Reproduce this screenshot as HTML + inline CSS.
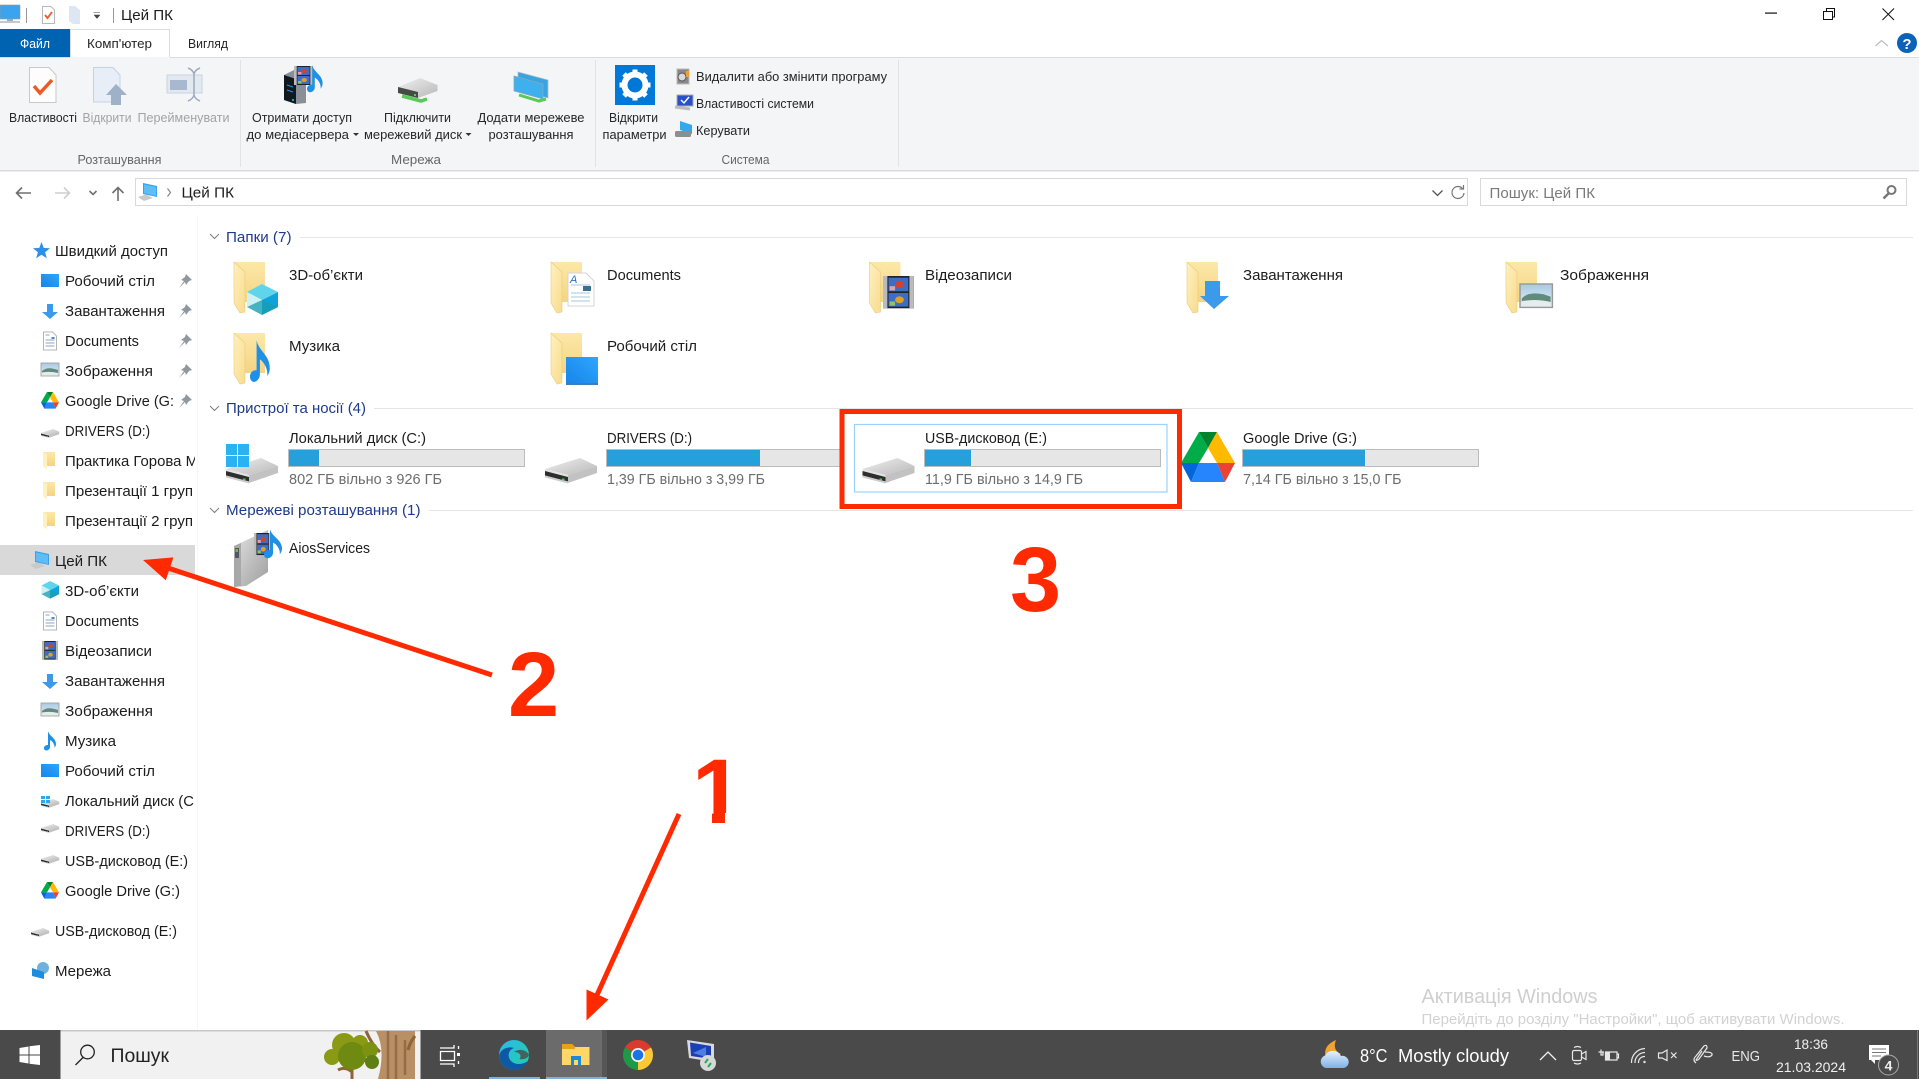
<!DOCTYPE html>
<html lang="uk"><head><meta charset="utf-8"><title>Цей ПК</title>
<style>
html,body{margin:0;padding:0;background:#fff;width:1919px;height:1079px;overflow:hidden}
svg{display:block;font-family:"Liberation Sans","Noto Sans CJK SC",sans-serif}
.t{font-size:15px;fill:#1c1c1c}
.r{font-size:12.5px;fill:#262626}
.g{font-size:12.5px;fill:#a3a3a3}
.h{font-size:12.5px;fill:#666}
.s{font-size:15px;fill:#1e3a8a}
.f{font-size:14.5px;fill:#6d6d6d}
.w{fill:#fff}
.big{font-size:92px;font-weight:bold;fill:#ff2a00}
.tray{fill:none;stroke:#e8e8e8;stroke-width:1.2}
</style></head><body>
<svg width="1919" height="1079" viewBox="0 0 1919 1079" xmlns="http://www.w3.org/2000/svg">
<defs>
<linearGradient id="fb" x1="0" y1="0" x2="0" y2="1"><stop offset="0" stop-color="#fde8a8"/><stop offset="1" stop-color="#f2cf7c"/></linearGradient>
<linearGradient id="ff" x1="0" y1="0" x2="1" y2="1"><stop offset="0" stop-color="#fff0c0"/><stop offset="1" stop-color="#f8dc8d"/></linearGradient>
<linearGradient id="dk" x1="0" y1="0" x2="1" y2="1"><stop offset="0" stop-color="#f0f0f0"/><stop offset="1" stop-color="#b8b8b8"/></linearGradient>
<linearGradient id="bl" x1="0" y1="1" x2="1" y2="0"><stop offset="0" stop-color="#1684e8"/><stop offset="1" stop-color="#2ea6ff"/></linearGradient>
<linearGradient id="edge" x1="0" y1="0" x2="1" y2="1"><stop offset="0" stop-color="#2fb8ee"/><stop offset="1" stop-color="#1fd0a0"/></linearGradient>
<linearGradient id="wx" x1="0" y1="0" x2="0" y2="1"><stop offset="0" stop-color="#e8f2fb"/><stop offset="1" stop-color="#7fb0e6"/></linearGradient>
<linearGradient id="tw" x1="0" y1="0" x2="1" y2="1"><stop offset="0" stop-color="#e4e4e4"/><stop offset="1" stop-color="#9d9d9d"/></linearGradient>
<linearGradient id="sky" x1="0" y1="0" x2="0" y2="1"><stop offset="0" stop-color="#a9c9e4"/><stop offset="1" stop-color="#e6f0f4"/></linearGradient>

<g id="folder">
<path d="M0 0H31V40H11V50L0 40Z" fill="url(#fb)"/>
<path d="M0 0L11 10V50L6 51L0 41Z" fill="url(#ff)" stroke="#eccb78" stroke-width=".6"/>
</g>
<g id="cube">
<path d="M0 8L15 0L31 8L15 16Z" fill="#5fd5ec"/>
<path d="M0 8L15 16V31L0 23Z" fill="#cdf2f5"/>
<path d="M15 16L31 8V23L15 31Z" fill="#0fa3da"/>
<path d="M0 23L15 16L31 23L15 31Z" fill="#1a9cb0" opacity=".75"/>
</g>
<g id="drive">
<path d="M0 11L35 0L52 8L23 17Z" fill="url(#dk)"/>
<path d="M23 17L52 8V15L23 25Z" fill="#c2c2c2"/>
<path d="M0 11L23 17V19L0 13Z" fill="#e2e2e2"/>
<path d="M0 13L23 19V23.500L0 17.500Z" fill="#2e2e2e"/>
<path d="M0 17.500L23 23.500V25.500L0 19.500Z" fill="#cdcdcd"/>
<rect x="17" y="20.500" width="2.500" height="1.800" fill="#40d060"/>
</g>
<g id="gd">
<path d="M18 0H36L27 16Z" fill="#00832d"/>
<path d="M18 0L27 16L18 31H0Z" fill="#00ac47"/>
<path d="M36 0L54 31H36L27 16Z" fill="#ffba00"/>
<path d="M0 31H18L10 50Z" fill="#0066da"/>
<path d="M18 31H36L44 50H10Z" fill="#2684fc"/>
<path d="M36 31H54L44 50Z" fill="#ea4335"/>
</g>
<g id="filmb">
<rect x="0" y="0" width="28" height="38" fill="#222"/>
<rect x="0" y="0" width="4" height="38" fill="#bbb"/><rect x="24" y="0" width="4" height="38" fill="#bbb"/>
<rect x="5" y="2" width="18" height="16" fill="#3c6ec8"/><rect x="5" y="20" width="18" height="16" fill="#3c6ec8"/>
<circle cx="15" cy="10" r="4" fill="#d8402a"/><circle cx="15" cy="28" r="4" fill="#e0a020"/>
<rect x="6" y="12" width="5" height="5" fill="#e8a0a0"/><rect x="6" y="30" width="5" height="5" fill="#90c070"/>
</g>
<path id="dl" d="M5 0H11V8H16L8 15L0 8H5Z" fill="#3b9aeb"/>
<g id="doc"><path d="M0 0H9L13 4V18H0Z" fill="#fff" stroke="#b5b5b5"/><path d="M2 3H6M2 8H11M2 11H11M2 14H11" stroke="#8aa6c8" stroke-width="1"/><path d="M8 5H11V7H8Z" fill="#4a8ac8"/></g>
<g id="pic"><rect width="18" height="13" fill="url(#sky)" stroke="#999" stroke-width=".8"/><path d="M1 8Q6 3 17 7V10H1Z" fill="#5f8a7c"/><path d="M1 9.500Q9 8 17 10V12.500H1Z" fill="#e4ecec"/></g>
<g id="sf"><path d="M0 0H12V14H4V17L0 14Z" fill="url(#fb)"/><path d="M0 0L4 2V17L0 14Z" fill="#fff0bf"/></g>
<path id="note" d="M4 0C5 5 12 7 12 13C12 15 11 16 10.500 17C11 13 8 10 6 9V16C6 18 4 19.500 2.500 19.500C1 19.500 0 18.500 0 17C0 15 2 14 4 14Z" fill="#1e90e8"/>
<g id="pin"><path d="M8 0L14 6L11 7L8 11L7 8L1 14L6 7L3 6L7 3Z" fill="#8f989e"/></g>
<g id="pc"><path d="M5 0L19 3V14L5 11Z" fill="#3aa1ea"/><path d="M6 1.500L18 4V13L6 10Z" fill="#5fbcf5"/><path d="M0 14L8 11.500L15 15L6 18Z" fill="#c6cacd"/></g>
</defs>

<!-- window -->
<rect width="1919" height="1079" fill="#fff"/>
<!-- title -->
<rect x="0" y="5" width="20" height="14" fill="#3aa4ee" stroke="#999" stroke-width=".6"/><rect x="7" y="19" width="6" height="2" fill="#aaa"/><rect x="0" y="21" width="20" height="2" fill="#c8c8c8"/>
<rect x="26" y="8" width="1" height="15" fill="#999"/>
<path d="M42.500 6.500H51L54.500 10V23.500H42.500Z" fill="#fff" stroke="#b8b8b8"/><path d="M45 15L47.500 18L52 12" fill="none" stroke="#ee5a24" stroke-width="1.800"/>
<path d="M69 6H75L80 10V24H73L69 21Z" fill="#dfe6f3"/>
<path d="M93.500 12.500H100M94 15H100L97 18.500Z" fill="#444" stroke="#444" stroke-width=".5"/>
<rect x="113" y="8" width="1" height="15" fill="#999"/>
<text class="t" x="121" y="20" textLength="52" lengthAdjust="spacingAndGlyphs">Цей ПК</text>
<rect x="1765" y="12.500" width="12" height="1.200" fill="#111"/>
<path d="M1823.500 11.500H1832.500V19.500H1823.500ZM1826.500 11V8.500H1834.500V17H1832.500" fill="none" stroke="#111" stroke-width="1"/>
<path d="M1882.500 8.500L1894 20M1894 8.500L1882.500 20" stroke="#111" stroke-width="1"/>

<!-- tabs -->
<rect x="0" y="29" width="70" height="28" fill="#0063b1"/>
<text x="20" y="48" class="r" style="fill:#fff" textLength="30" lengthAdjust="spacingAndGlyphs">Файл</text>
<path d="M70.500 57V29.500H169.500V57" fill="#fff" stroke="#dadbdc"/>
<text x="87" y="48" class="r" textLength="65" lengthAdjust="spacingAndGlyphs">Комп'ютер</text>
<text x="188" y="48" class="r" textLength="40" lengthAdjust="spacingAndGlyphs">Вигляд</text>
<path d="M1875.500 46L1881.500 40.500L1888 46" fill="none" stroke="#bcbcbc" stroke-width="1.200"/>
<circle cx="1907" cy="43" r="10" fill="#0b62b8"/><text x="1907" y="49" text-anchor="middle" font-size="15" font-weight="bold" fill="#fff">?</text>

<!-- ribbon -->
<rect x="0" y="57" width="1919" height="114" fill="#f4f5f7"/>
<rect x="0" y="57" width="70" height="1" fill="#dadbdc"/><rect x="170" y="57" width="1749" height="1" fill="#dadbdc"/>
<rect x="0" y="170" width="1919" height="1.500" fill="#dadbdc"/>
<rect x="240" y="60" width="1" height="107" fill="#e2e3e5"/><rect x="595" y="60" width="1" height="107" fill="#e2e3e5"/><rect x="898" y="60" width="1" height="107" fill="#e2e3e5"/>

<path d="M29.500 67.500H49L56 75V102.500H29.500Z" fill="#fdfdfd" stroke="#c9c9c9"/>
<path d="M34 86L40 93L52 80" fill="none" stroke="#ee5a24" stroke-width="3.500"/>
<path d="M93.500 67.500H113L120 75V102H93.500Z" fill="#e7eef8" stroke="#c4d2e6"/>
<path d="M116 84L127 95H121V105H111V95H106Z" fill="#9fb1c8"/>
<rect x="167" y="75" width="35" height="18" fill="#e3e9f1" stroke="#c9d3df"/><rect x="170" y="80" width="17" height="10" fill="#a8b8ce"/>
<path d="M188 68Q193 70 194 74V95Q193 99 188 101M200 68Q195 70 194 74M194 95Q195 99 200 101" fill="none" stroke="#9caabd" stroke-width="1.500"/>

<text class="r" x="9" y="122" textLength="68" lengthAdjust="spacingAndGlyphs">Властивості</text>
<text class="g" x="82.500" y="122" textLength="49" lengthAdjust="spacingAndGlyphs">Відкрити</text>
<text class="g" x="137.500" y="122" textLength="92" lengthAdjust="spacingAndGlyphs">Перейменувати</text>
<text class="h" x="77.500" y="164" textLength="84" lengthAdjust="spacingAndGlyphs">Розташування</text>

<!-- media server -->
<path d="M284 75L294 70L306 74V103L296 104L284 100Z" fill="#8a8f96"/><path d="M284 75L296 79V104L284 100Z" fill="#101820"/>
<path d="M287 85L293 87M287 90L293 92" stroke="#2a90e0" stroke-width="1"/><circle cx="293" cy="100" r="1" fill="#2ad0f0"/>
<use href="#filmb" transform="translate(294,66) scale(.68,.5)"/>
<use href="#note" transform="translate(307,65) scale(1.300,1.400)"/>
<!-- map drive -->
<path d="M398 87L420 78L437.500 85V91L418 98L398 93Z" fill="url(#dk)"/><path d="M398 87L418 92V98L398 93Z" fill="#454a45"/>
<rect x="414" y="94" width="2" height="2" fill="#40d060"/><path d="M402 96L421 101L427 99" fill="none" stroke="#5ac85a" stroke-width="3.500"/>
<!-- net location -->
<path d="M518 72L548 80V98L518 90Z" fill="#3aa4e0" stroke="#a8bccb" stroke-width=".8"/><path d="M514 76L543 84V99L514 91Z" fill="#3fb0ee" stroke="#8aa6ba" stroke-width=".8"/>
<path d="M519 95L539 101L546 99" fill="none" stroke="#5ac85a" stroke-width="3"/>

<text class="r" x="252" y="122" textLength="100" lengthAdjust="spacingAndGlyphs">Отримати доступ</text>
<text class="r" x="246.500" y="139" textLength="102.500" lengthAdjust="spacingAndGlyphs">до медіасервера</text>
<path d="M353 133H359L356 136Z" fill="#333"/>
<text class="r" x="384" y="122" textLength="67" lengthAdjust="spacingAndGlyphs">Підключити</text>
<text class="r" x="364" y="139" textLength="98" lengthAdjust="spacingAndGlyphs">мережевий диск</text>
<path d="M465.500 133H471.500L468.500 136Z" fill="#333"/>
<text class="r" x="477.500" y="122" textLength="107" lengthAdjust="spacingAndGlyphs">Додати мережеве</text>
<text class="r" x="488.500" y="139" textLength="85" lengthAdjust="spacingAndGlyphs">розташування</text>
<text class="h" x="391" y="164" textLength="50" lengthAdjust="spacingAndGlyphs">Мережа</text>

<!-- settings -->
<rect x="615" y="65" width="40" height="40" fill="#0078d7"/>
<circle cx="635" cy="85" r="10.500" fill="none" stroke="#fff" stroke-width="6"/>
<g stroke="#fff" stroke-width="5"><path d="M635 69.500V74M635 96V100.500M619.500 85H624M646 85H650.500M624 74L627.500 77.500M642.500 92.500L646 96M646 74L642.500 77.500M627.500 92.500L624 96"/></g>
<text class="r" x="609" y="122" textLength="49" lengthAdjust="spacingAndGlyphs">Відкрити</text>
<text class="r" x="602.500" y="139" textLength="64" lengthAdjust="spacingAndGlyphs">параметри</text>
<rect x="677" y="69" width="12" height="15" fill="#888" stroke="#bbb"/><circle cx="682" cy="77" r="4" fill="#d8d8d8" stroke="#555"/><rect x="686" y="71" width="3" height="6" fill="#f0a030"/>
<rect x="677" y="95" width="16" height="11" fill="#2a50c8" stroke="#aaa"/><path d="M681 100L684 103L689 97" fill="none" stroke="#fff" stroke-width="1.400"/><path d="M675 107L690 109" stroke="#bbb" stroke-width="3"/>
<path d="M680 121L692 125V134L680 130Z" fill="#32a8ee"/><rect x="675" y="131" width="16" height="6" fill="#8a8f94" rx="1.500"/>
<text class="r" x="696" y="81" textLength="191" lengthAdjust="spacingAndGlyphs">Видалити або змінити програму</text>
<text class="r" x="696" y="108" textLength="118" lengthAdjust="spacingAndGlyphs">Властивості системи</text>
<text class="r" x="696" y="135" textLength="54" lengthAdjust="spacingAndGlyphs">Керувати</text>
<text class="h" x="721.500" y="164" textLength="48" lengthAdjust="spacingAndGlyphs">Система</text>

<!-- nav -->
<g fill="none" stroke="#6f6f6f" stroke-width="1.600">
<path d="M16.500 193H31M22 187.500L16.500 193L22 198.500"/>
<path d="M55 193H69.500M64 187.500L69.500 193L64 198.500" stroke="#cfcfcf"/>
<path d="M89.500 191L93 194.500L96.500 191"/>
<path d="M118 187.500V201M112.500 193L118 187.500L123.500 193"/>
</g>
<path d="M135.500 178.500H1467.500V205.500H135.500Z" fill="#fff" stroke="#d9d9d9"/>
<path d="M1480.500 178.500H1906.500V205.500H1480.500Z" fill="#fff" stroke="#d9d9d9"/>
<use href="#pc" transform="translate(138,183)"/>
<path d="M167.500 188.500L170.500 192.500L167.500 196.500" fill="none" stroke="#888" stroke-width="1.200"/>
<text class="t" x="181.500" y="197.500" textLength="52.500" lengthAdjust="spacingAndGlyphs">Цей ПК</text>
<path d="M1432.500 190.500L1437.500 195.500L1442.500 190.500" fill="none" stroke="#555" stroke-width="1.300"/>
<path d="M1462.500 188.500A6 6 0 1 0 1464 193M1463.500 185V189H1459.500" fill="none" stroke="#777" stroke-width="1.200"/>
<text x="1489.500" y="198" font-size="15" fill="#7a7a7a" textLength="105.500" lengthAdjust="spacingAndGlyphs">Пошук: Цей ПК</text>
<circle cx="1891.500" cy="190" r="4" fill="none" stroke="#777" stroke-width="2"/><path d="M1888.500 193.500L1883.500 198.500" stroke="#777" stroke-width="2.500"/>

<!-- sidebar -->
<rect x="197" y="215" width="1" height="815" fill="#f7f7f7"/>
<rect x="0" y="545" width="195" height="30" fill="#d9d9d9"/>
<path d="M41.500 242L43.700 247.900L50.060 248.200L45.100 252.200L46.800 258.300L41.500 254.800L36.200 258.300L37.900 252.200L32.940 248.200L39.300 247.900Z" fill="#2c90e8"/>
<text class="t" x="55" y="256" textLength="113" lengthAdjust="spacingAndGlyphs">Швидкий доступ</text>
<rect x="41" y="274" width="18" height="13" fill="url(#bl)"/>
<text class="t" x="65" y="286" textLength="90" lengthAdjust="spacingAndGlyphs">Робочий стіл</text>
<use href="#dl" x="42" y="304"/>
<text class="t" x="65" y="316" textLength="100" lengthAdjust="spacingAndGlyphs">Завантаження</text>
<use href="#doc" x="43.500" y="332"/>
<text class="t" x="65" y="346" textLength="74" lengthAdjust="spacingAndGlyphs">Documents</text>
<use href="#pic" x="41" y="363"/>
<text class="t" x="65" y="376" textLength="88" lengthAdjust="spacingAndGlyphs">Зображення</text>
<use href="#gd" transform="translate(41,392) scale(.333)"/>
<text class="t" x="65" y="406" textLength="109" lengthAdjust="spacingAndGlyphs">Google Drive (G:</text>
<use href="#drive" transform="translate(41,429) scale(.35)"/>
<text class="t" x="65" y="436" textLength="85" lengthAdjust="spacingAndGlyphs">DRIVERS (D:)</text>
<use href="#sf" x="43" y="452"/>
<svg x="60" y="450" width="135" height="22"><text class="t" x="5" y="16" textLength="133" lengthAdjust="spacingAndGlyphs">Практика Горова М</text></svg>
<use href="#sf" x="43" y="482"/>
<svg x="60" y="480" width="134" height="22"><text class="t" x="5" y="16" textLength="128" lengthAdjust="spacingAndGlyphs">Презентації 1 груп</text></svg>
<use href="#sf" x="43" y="512"/>
<svg x="60" y="510" width="134" height="22"><text class="t" x="5" y="16" textLength="128" lengthAdjust="spacingAndGlyphs">Презентації 2 груп</text></svg>
<use href="#pin" x="178" y="274"/><use href="#pin" x="178" y="304"/><use href="#pin" x="178" y="334"/><use href="#pin" x="178" y="364"/><use href="#pin" x="178" y="394"/>

<use href="#pc" transform="translate(30,551)"/>
<text class="t" x="55" y="566" textLength="52" lengthAdjust="spacingAndGlyphs">Цей ПК</text>
<use href="#cube" transform="translate(41.500,581) scale(.57)"/>
<text class="t" x="65" y="596" textLength="74" lengthAdjust="spacingAndGlyphs">3D-об’єкти</text>
<use href="#doc" x="43.500" y="612"/>
<text class="t" x="65" y="626" textLength="74" lengthAdjust="spacingAndGlyphs">Documents</text>
<use href="#filmb" transform="translate(42,641) scale(.57,.49)"/>
<text class="t" x="65" y="656" textLength="87" lengthAdjust="spacingAndGlyphs">Відеозаписи</text>
<use href="#dl" x="42" y="674"/>
<text class="t" x="65" y="686" textLength="100" lengthAdjust="spacingAndGlyphs">Завантаження</text>
<use href="#pic" x="41" y="703"/>
<text class="t" x="65" y="716" textLength="88" lengthAdjust="spacingAndGlyphs">Зображення</text>
<use href="#note" x="44" y="731"/>
<text class="t" x="65" y="746" textLength="51" lengthAdjust="spacingAndGlyphs">Музика</text>
<rect x="41" y="764" width="18" height="13" fill="url(#bl)"/>
<text class="t" x="65" y="776" textLength="90" lengthAdjust="spacingAndGlyphs">Робочий стіл</text>
<use href="#drive" transform="translate(41,799) scale(.35)"/><g fill="#2ea6ee"><rect x="41" y="796" width="4" height="3"/><rect x="46" y="796" width="4" height="3"/><rect x="41" y="800" width="4" height="3"/><rect x="46" y="800" width="4" height="3"/></g>
<svg x="60" y="790" width="134" height="22"><text class="t" x="5" y="16" textLength="138" lengthAdjust="spacingAndGlyphs">Локальний диск (C:)</text></svg>
<use href="#drive" transform="translate(41,824) scale(.35)"/>
<text class="t" x="65" y="836" textLength="85" lengthAdjust="spacingAndGlyphs">DRIVERS (D:)</text>
<use href="#drive" transform="translate(41,855) scale(.35)"/>
<text class="t" x="65" y="866" textLength="123" lengthAdjust="spacingAndGlyphs">USB-дисковод (E:)</text>
<use href="#gd" transform="translate(41,882) scale(.333)"/>
<text class="t" x="65" y="896" textLength="115" lengthAdjust="spacingAndGlyphs">Google Drive (G:)</text>
<use href="#drive" transform="translate(31,928) scale(.35)"/>
<text class="t" x="55" y="936" textLength="122" lengthAdjust="spacingAndGlyphs">USB-дисковод (E:)</text>
<circle cx="43" cy="968" r="6" fill="#6fb0dc"/><path d="M32 968L44 972V979L32 976Z" fill="#1d8de0"/>
<text class="t" x="55" y="976" textLength="56" lengthAdjust="spacingAndGlyphs">Мережа</text>

<!-- content groups -->
<g fill="none" stroke="#7d7d7d" stroke-width="1"><path d="M210 234L214.500 238.500L219 234M210 406L214.500 410.500L219 406M210 508L214.500 512.500L219 508"/></g>
<text class="s" x="226" y="242" textLength="65.500" lengthAdjust="spacingAndGlyphs">Папки (7)</text>
<rect x="300" y="237" width="1613" height="1" fill="#e5e5e5"/>
<text class="s" x="226" y="413" textLength="140" lengthAdjust="spacingAndGlyphs">Пристрої та носії (4)</text>
<rect x="374" y="408" width="1539" height="1" fill="#e5e5e5"/>
<text class="s" x="226" y="515" textLength="194.500" lengthAdjust="spacingAndGlyphs">Мережеві розташування (1)</text>
<rect x="429" y="510" width="1484" height="1" fill="#e5e5e5"/>

<!-- folders row 1 -->
<use href="#folder" x="234" y="262"/><use href="#cube" x="247" y="284"/>
<text class="t" x="289" y="280" textLength="74" lengthAdjust="spacingAndGlyphs">3D-об’єкти</text>
<use href="#folder" x="551" y="262"/>
<path d="M568 273H586L594 281V306H568Z" fill="#fff" stroke="#d4d4d4"/><path d="M571 285H590M571 293H590M571 297H590M571 301H590" stroke="#a9c3dd"/><text x="570" y="283" font-size="11" font-style="italic" fill="#2a6fc0">A</text><rect x="583" y="286" width="8" height="5" fill="#3a6f90"/>
<text class="t" x="607" y="280" textLength="74" lengthAdjust="spacingAndGlyphs">Documents</text>
<use href="#folder" x="869.500" y="262"/><use href="#filmb" transform="translate(883,276) scale(1.100,.85)"/>
<text class="t" x="925" y="280" textLength="87" lengthAdjust="spacingAndGlyphs">Відеозаписи</text>
<use href="#folder" x="1187" y="262"/><path d="M1209 281H1224V296H1233L1218 309L1204 296H1209Z" transform="translate(-4,0)" fill="#3b9aeb"/>
<text class="t" x="1243" y="280" textLength="100" lengthAdjust="spacingAndGlyphs">Завантаження</text>
<use href="#folder" x="1506" y="262"/><use href="#pic" transform="translate(1520,284) scale(1.800,1.800)"/>
<text class="t" x="1560" y="280" textLength="89" lengthAdjust="spacingAndGlyphs">Зображення</text>
<!-- row 2 -->
<use href="#folder" x="234" y="333"/><use href="#note" transform="translate(250,340) scale(1.650,2.150)"/>
<text class="t" x="289" y="351" textLength="51" lengthAdjust="spacingAndGlyphs">Музика</text>
<use href="#folder" x="551" y="333"/><rect x="566" y="357" width="32" height="28" fill="url(#bl)"/><rect x="566" y="383" width="32" height="2" fill="#3c7eb8"/>
<text class="t" x="607" y="351" textLength="90" lengthAdjust="spacingAndGlyphs">Робочий стіл</text>

<!-- drives -->
<use href="#drive" x="226" y="458"/>
<g fill="#2ab2f2"><rect x="226" y="444" width="11" height="11"/><rect x="238" y="444" width="11" height="11"/><rect x="226" y="456" width="11" height="11"/><rect x="238" y="456" width="11" height="11"/></g>
<text class="t" x="289" y="443" textLength="137" lengthAdjust="spacingAndGlyphs">Локальний диск (C:)</text>
<rect x="288.500" y="449.500" width="236" height="17" fill="#e6e6e6" stroke="#bcbcbc"/><rect x="289" y="450" width="30" height="16" fill="#26a0da"/>
<text class="f" x="289" y="484" textLength="153" lengthAdjust="spacingAndGlyphs">802 ГБ вільно з 926 ГБ</text>

<use href="#drive" x="545" y="458"/>
<text class="t" x="607" y="443" textLength="85" lengthAdjust="spacingAndGlyphs">DRIVERS (D:)</text>
<rect x="606.500" y="449.500" width="236" height="17" fill="#e6e6e6" stroke="#bcbcbc"/><rect x="607" y="450" width="153" height="16" fill="#26a0da"/>
<text class="f" x="607" y="484" textLength="158" lengthAdjust="spacingAndGlyphs">1,39 ГБ вільно з 3,99 ГБ</text>

<rect x="854.500" y="424.500" width="312.500" height="67.500" fill="#fff" stroke="#99d1ff" stroke-width="1.200"/>
<use href="#drive" x="862.500" y="458"/>
<text class="t" x="925" y="443" textLength="122" lengthAdjust="spacingAndGlyphs">USB-дисковод (E:)</text>
<rect x="924.500" y="449.500" width="236" height="17" fill="#e6e6e6" stroke="#bcbcbc"/><rect x="925" y="450" width="46" height="16" fill="#26a0da"/>
<text class="f" x="925" y="484" textLength="158" lengthAdjust="spacingAndGlyphs">11,9 ГБ вільно з 14,9 ГБ</text>

<use href="#gd" x="1181" y="432"/>
<text class="t" x="1243" y="443" textLength="114" lengthAdjust="spacingAndGlyphs">Google Drive (G:)</text>
<rect x="1242.500" y="449.500" width="236" height="17" fill="#e6e6e6" stroke="#bcbcbc"/><rect x="1243" y="450" width="122" height="16" fill="#26a0da"/>
<text class="f" x="1243" y="484" textLength="158.500" lengthAdjust="spacingAndGlyphs">7,14 ГБ вільно з 15,0 ГБ</text>

<!-- network -->
<path d="M234 546L268 530V572L246 586L234 587Z" fill="url(#tw)"/><path d="M234 546L241 543V586L234 587Z" fill="#a8a8a8"/><rect x="235" y="548" width="4" height="10" fill="#556"/><rect x="235.500" y="549" width="2.500" height="3" fill="#60c040"/>
<use href="#filmb" transform="translate(254,533) scale(.62,.58)"/><use href="#note" transform="translate(264,529) scale(1.500,1.500)"/>
<text class="t" x="289" y="553" textLength="81" lengthAdjust="spacingAndGlyphs">AiosServices</text>

<!-- watermark -->
<text x="1421.500" y="1003" font-size="20" fill="#cfcfcf" textLength="176" lengthAdjust="spacingAndGlyphs">Активація Windows</text>
<text x="1421.500" y="1024" font-size="14.500" fill="#d2d2d2" textLength="423" lengthAdjust="spacingAndGlyphs">Перейдіть до розділу "Настройки", щоб активувати Windows.</text>

<!-- taskbar -->
<rect x="0" y="1030" width="1919" height="49" fill="#4a4a4a"/>
<g fill="#fff"><path d="M19.500 1048L28.500 1046.500V1054.500H19.500ZM29.500 1046.300L40 1045V1054.500H29.500ZM19.500 1055.500H28.500V1063.500L19.500 1062ZM29.500 1055.500H40V1065L29.500 1063.700Z"/></g>
<rect x="60.500" y="1030" width="360" height="49" fill="#f1f1f1"/><rect x="60.500" y="1030" width="360" height="1.500" fill="#c8c8c8"/>
<circle cx="87.500" cy="1052" r="6.800" fill="none" stroke="#222" stroke-width="1.300"/><path d="M83 1057.500L75.500 1065" stroke="#222" stroke-width="1.300"/>
<text x="110.500" y="1062" font-size="19.500" fill="#222" textLength="58.500" lengthAdjust="spacingAndGlyphs">Пошук</text>
<!-- tree -->
<path d="M376 1031H415V1079H378Q386 1050 376 1031Z" fill="#b98f66"/><path d="M388 1031V1079M396 1035V1079M405 1040V1075" stroke="#966c44" stroke-width="2.500"/>
<path d="M366 1031Q372 1045 380 1052M415 1036Q410 1042 408 1050M352 1072Q345 1066 338 1070M352 1079V1066L370 1058" fill="none" stroke="#8e6438" stroke-width="3"/>
<g fill="#8b9a14"><circle cx="344" cy="1045" r="12"/><circle cx="360" cy="1043" r="8"/><circle cx="332" cy="1057" r="8"/><circle cx="352" cy="1056" r="14" fill="#6e8a10"/><circle cx="370" cy="1050" r="8" fill="#7b9213"/><circle cx="372" cy="1062" r="7" fill="#5f7f12"/></g>
<!-- task view -->
<g fill="none" stroke="#fff" stroke-width="1.300"><path d="M440.500 1051.500H454.500V1060.500H440.500ZM440 1048H454V1045M440 1064H454V1067M458.500 1046V1049M458.500 1061V1064"/><rect x="457" y="1053" width="3" height="3" fill="#fff" stroke="none"/></g>
<!-- edge -->
<circle cx="514" cy="1055" r="15" fill="url(#edge)"/>
<path d="M499 1056C500 1066 509 1070.500 514 1070C521 1070 526 1066 528 1061C522 1065 515 1065 511 1061C507 1057 508 1050 514 1048C508 1046 500 1049 499 1056Z" fill="#0d59a4"/>
<path d="M514 1052C520 1052 522 1056 519.500 1059C524 1060 528.500 1058 529 1054.500C526 1050 520 1048 514 1052Z" fill="#4a4a4a" opacity=".8"/>
<rect x="489" y="1077" width="51" height="2" fill="#76b3e8"/>
<!-- explorer -->
<rect x="546" y="1030" width="61" height="49" fill="#6b6b6b"/><rect x="602" y="1030" width="5" height="49" fill="#565656"/>
<rect x="546" y="1077" width="61" height="2" fill="#76b3e8"/>
<path d="M562 1044H572L575 1047H589.500V1065H562Z" fill="#ffd766"/><path d="M562 1044H572L575 1047V1049H562Z" fill="#e6a317"/>
<rect x="571" y="1056" width="10" height="9" fill="#1e88d8"/><rect x="574" y="1060" width="4" height="5" fill="#ffd766"/>
<!-- chrome -->
<path d="M625 1047.500A15 15 0 0 1 651 1047.500L638 1055Z" fill="#db3a2e"/>
<path d="M651 1047.500A15 15 0 0 1 638 1070L638 1055Z" fill="#fcc934"/>
<path d="M638 1070A15 15 0 0 1 625 1047.500L638 1055Z" fill="#1e9a45"/>
<circle cx="638" cy="1055" r="7" fill="#f6f6f6"/><circle cx="638" cy="1055" r="5.300" fill="#1a73e8"/>
<!-- rdp -->
<path d="M687 1040L714 1044V1062L689 1058Z" fill="#d8dade"/><path d="M690 1042.500L711 1046V1059L691 1056Z" fill="#1b3fb5"/><path d="M693 1053L706 1047V1057Z" fill="#4a80e0"/>
<circle cx="708" cy="1063" r="8" fill="#d6d9d6"/><path d="M705 1063L708 1059M711 1063L708 1067" stroke="#2aa860" stroke-width="2"/>

<!-- tray -->
<path d="M1336 1040Q1322 1046 1326 1058L1341 1054Q1332 1050 1336 1040Z" fill="#f0a52f"/>
<g fill="url(#wx)"><path d="M1326 1068A6.500 6.500 0 0 1 1325 1055.500A9 9 0 0 1 1341 1056A6 6 0 0 1 1344 1068Z"/></g>
<text x="1360" y="1062" font-size="18" fill="#fff" textLength="27.500" lengthAdjust="spacingAndGlyphs">8°C</text>
<text x="1398" y="1062" font-size="18" fill="#fff" textLength="111" lengthAdjust="spacingAndGlyphs">Mostly cloudy</text>
<path d="M1540 1060L1548 1052L1556 1060" fill="none" stroke="#f0f0f0" stroke-width="1.300"/>
<g class="tray">
<rect x="1572.500" y="1050.500" width="9" height="10" rx="1.500"/><path d="M1581.500 1054L1586 1051.500V1059.500L1581.500 1057M1574 1047.500Q1577.500 1045.500 1581 1047.500M1574 1063Q1577.500 1065 1581 1063"/>
<path d="M1605.500 1052H1617V1060H1605.500ZM1617 1054H1618.500V1058H1617M1598.500 1052H1604M1601 1049.500V1052M1601 1052V1055H1603V1052"/><rect x="1606" y="1052.500" width="4" height="7" fill="#e8e8e8" stroke="none"/>
<path d="M1631.500 1063A14 14 0 0 1 1645 1048.500M1635 1063A10 10 0 0 1 1645 1052.500M1638.500 1063A6 6 0 0 1 1645 1056.500"/><circle cx="1644.500" cy="1062" r="1.200" fill="#e8e8e8" stroke="none"/>
<path d="M1658.500 1053H1662L1667 1050V1060.500L1662 1058H1658.500ZM1671 1052.500L1676.500 1058M1676.500 1052.500L1671 1058"/>
<path d="M1696 1063Q1692 1060 1696 1056L1704 1046Q1707 1044 1707 1048L1699 1059Q1697 1061 1696 1060L1702 1051M1705 1052Q1713 1052 1712 1055Q1710 1058 1704 1056"/>
</g>
<text x="1731.500" y="1061" font-size="14.500" fill="#e8e8e8" textLength="28.500" lengthAdjust="spacingAndGlyphs">ENG</text>
<text x="1794" y="1049" font-size="14" fill="#f0f0f0" textLength="34" lengthAdjust="spacingAndGlyphs">18:36</text>
<text x="1776" y="1072" font-size="14" fill="#f0f0f0" textLength="70" lengthAdjust="spacingAndGlyphs">21.03.2024</text>
<path d="M1869 1045H1889V1060H1875V1064L1871 1060H1869Z" fill="#fff"/><path d="M1872 1049H1886M1872 1052.500H1886M1872 1056H1881" stroke="#777" stroke-width="1"/>
<circle cx="1888.500" cy="1065" r="10" fill="#4a4a4a" stroke="#aaa" stroke-width="1"/>
<text x="1888.500" y="1070.500" text-anchor="middle" font-size="14" font-weight="bold" fill="#f0f0f0">4</text>
<rect x="1917" y="1030" width="1" height="49" fill="#777"/>

<!-- annotations -->
<rect x="842" y="411.500" width="337.500" height="95" fill="none" stroke="#ff2a00" stroke-width="5"/>
<path d="M679 814L597 995" stroke="#ff2a00" stroke-width="5"/>
<path d="M586.500 1020.500L586.500 989.500L608.500 999.500Z" fill="#ff2a00"/>
<path d="M492 675L168 568" stroke="#ff2a00" stroke-width="5"/>
<path d="M143 560L173.400 557.400L165.800 580.200Z" fill="#ff2a00"/>
<text class="big" x="692" y="823">1</text>
<rect x="686" y="813" width="26" height="11" fill="#fff"/><rect x="725" y="813" width="22" height="11" fill="#fff"/>
<text class="big" x="508" y="716">2</text>
<text class="big" x="1010" y="611">3</text>
</svg>
</body></html>
